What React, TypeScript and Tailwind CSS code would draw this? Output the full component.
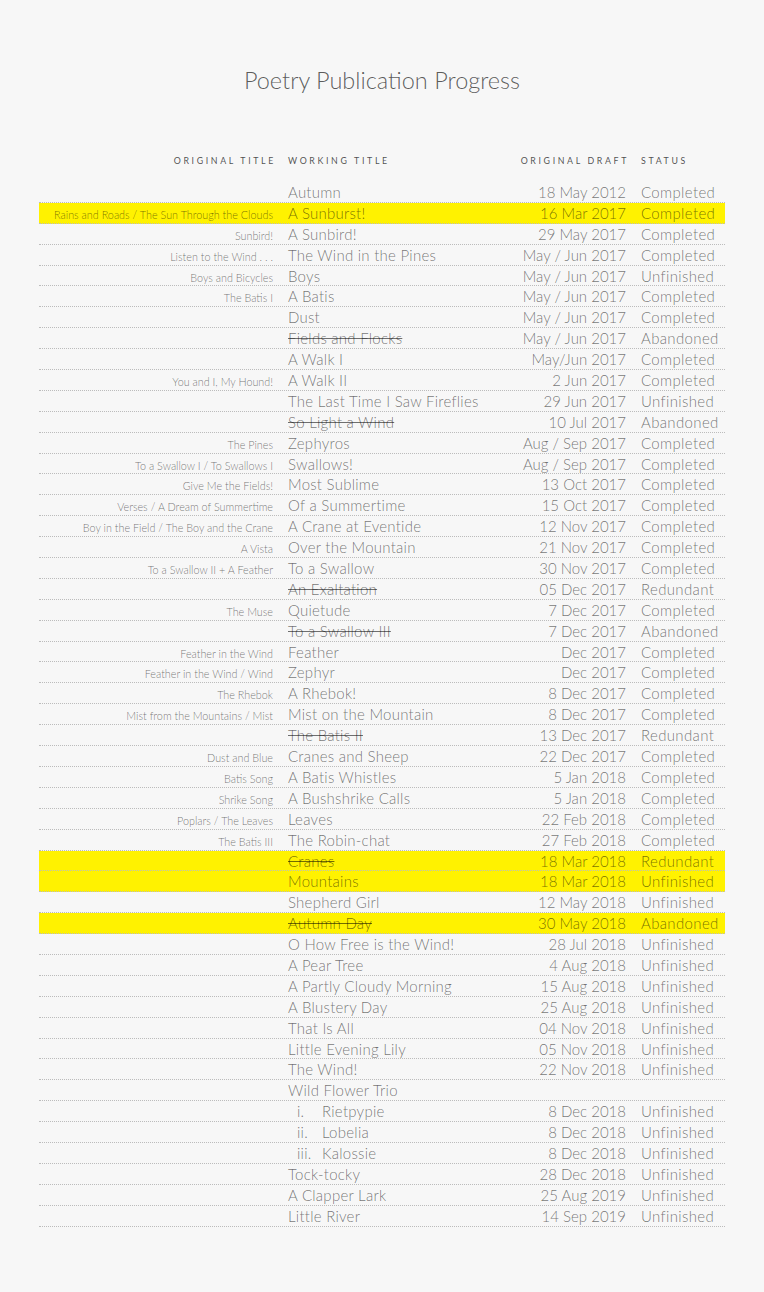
import React from "react";

type Poem = {
  original?: string;
  title: string;
  draft?: string;
  status?: string;
  struck?: boolean;
  marked?: boolean;
  sub?: string;
};

const poems: Poem[] = [
  { title: "Autumn", draft: "18 May 2012", status: "Completed" },
  { original: "Rains and Roads / The Sun Through the Clouds", title: "A Sunburst!", draft: "16 Mar 2017", status: "Completed", marked: true },
  { original: "Sunbird!", title: "A Sunbird!", draft: "29 May 2017", status: "Completed" },
  { original: "Listen to the Wind . . .", title: "The Wind in the Pines", draft: "May / Jun 2017", status: "Completed" },
  { original: "Boys and Bicycles", title: "Boys", draft: "May / Jun 2017", status: "Unfinished" },
  { original: "The Batis I", title: "A Batis", draft: "May / Jun 2017", status: "Completed" },
  { title: "Dust", draft: "May / Jun 2017", status: "Completed" },
  { title: "Fields and Flocks", draft: "May / Jun 2017", status: "Abandoned", struck: true },
  { title: "A Walk I", draft: "May/Jun 2017", status: "Completed" },
  { original: "You and I, My Hound!", title: "A Walk II", draft: "2 Jun 2017", status: "Completed" },
  { title: "The Last Time I Saw Fireflies", draft: "29 Jun 2017", status: "Unfinished" },
  { title: "So Light a Wind", draft: "10 Jul 2017", status: "Abandoned", struck: true },
  { original: "The Pines", title: "Zephyros", draft: "Aug / Sep 2017", status: "Completed" },
  { original: "To a Swallow I / To Swallows I", title: "Swallows!", draft: "Aug / Sep 2017", status: "Completed" },
  { original: "Give Me the Fields!", title: "Most Sublime", draft: "13 Oct 2017", status: "Completed" },
  { original: "Verses / A Dream of Summertime", title: "Of a Summertime", draft: "15 Oct 2017", status: "Completed" },
  { original: "Boy in the Field / The Boy and the Crane", title: "A Crane at Eventide", draft: "12 Nov 2017", status: "Completed" },
  { original: "A Vista", title: "Over the Mountain", draft: "21 Nov 2017", status: "Completed" },
  { original: "To a Swallow II + A Feather", title: "To a Swallow", draft: "30 Nov 2017", status: "Completed" },
  { title: "An Exaltation", draft: "05 Dec 2017", status: "Redundant", struck: true },
  { original: "The Muse", title: "Quietude", draft: "7 Dec 2017", status: "Completed" },
  { title: "To a Swallow III", draft: "7 Dec 2017", status: "Abandoned", struck: true },
  { original: "Feather in the Wind", title: "Feather", draft: "Dec 2017", status: "Completed" },
  { original: "Feather in the Wind / Wind", title: "Zephyr", draft: "Dec 2017", status: "Completed" },
  { original: "The Rhebok", title: "A Rhebok!", draft: "8 Dec 2017", status: "Completed" },
  { original: "Mist from the Mountains / Mist", title: "Mist on the Mountain", draft: "8 Dec 2017", status: "Completed" },
  { title: "The Batis II", draft: "13 Dec 2017", status: "Redundant", struck: true },
  { original: "Dust and Blue", title: "Cranes and Sheep", draft: "22 Dec 2017", status: "Completed" },
  { original: "Batis Song", title: "A Batis Whistles", draft: "5 Jan 2018", status: "Completed" },
  { original: "Shrike Song", title: "A Bushshrike Calls", draft: "5 Jan 2018", status: "Completed" },
  { original: "Poplars / The Leaves", title: "Leaves", draft: "22 Feb 2018", status: "Completed" },
  { original: "The Batis III", title: "The Robin-chat", draft: "27 Feb 2018", status: "Completed" },
  { title: "Cranes", draft: "18 Mar 2018", status: "Redundant", struck: true, marked: true },
  { title: "Mountains", draft: "18 Mar 2018", status: "Unfinished", marked: true },
  { title: "Shepherd Girl", draft: "12 May 2018", status: "Unfinished" },
  { title: "Autumn Day", draft: "30 May 2018", status: "Abandoned", struck: true, marked: true },
  { title: "O How Free is the Wind!", draft: "28 Jul 2018", status: "Unfinished" },
  { title: "A Pear Tree", draft: "4 Aug 2018", status: "Unfinished" },
  { title: "A Partly Cloudy Morning", draft: "15 Aug 2018", status: "Unfinished" },
  { title: "A Blustery Day", draft: "25 Aug 2018", status: "Unfinished" },
  { title: "That Is All", draft: "04 Nov 2018", status: "Unfinished" },
  { title: "Little Evening Lily", draft: "05 Nov 2018", status: "Unfinished" },
  { title: "The Wind!", draft: "22 Nov 2018", status: "Unfinished" },
  { title: "Wild Flower Trio" },
  { sub: "i.", title: "Rietpypie", draft: "8 Dec 2018", status: "Unfinished" },
  { sub: "ii.", title: "Lobelia", draft: "8 Dec 2018", status: "Unfinished" },
  { sub: "iii.", title: "Kalossie", draft: "8 Dec 2018", status: "Unfinished" },
  { title: "Tock-tocky", draft: "28 Dec 2018", status: "Unfinished" },
  { title: "A Clapper Lark", draft: "25 Aug 2019", status: "Unfinished" },
  { title: "Little River", draft: "14 Sep 2019", status: "Unfinished" },
];

const cols = "grid grid-cols-[249px_220px_133px_84px]";

function Row({ poem }: { poem: Poem }) {
  return (
    <div
      className={`${cols} h-[20.9px] items-baseline border-b border-dotted border-[#bcbcbc] ${
        poem.marked ? "bg-[#fff200]" : ""
      }`}
    >
      <div className="truncate pr-[15px] text-right text-[10.8px] leading-[20px] text-black/55">
        {poem.original}
      </div>
      <div
        className={`whitespace-nowrap text-[15px] leading-[20px] tracking-[0.25px] text-black/55 ${
          poem.struck ? "line-through" : ""
        }`}
      >
        {poem.sub ? (
          <>
            <span className="ml-[9px] inline-block w-[25px]">{poem.sub}</span>
            <span>{poem.title}</span>
          </>
        ) : (
          poem.title
        )}
      </div>
      <div className="whitespace-nowrap pr-[15px] text-right text-[15px] leading-[20px] text-black/55">
        {poem.draft}
      </div>
      <div className="whitespace-nowrap text-[15px] leading-[20px] tracking-[0.35px] text-black/55">
        {poem.status}
      </div>
    </div>
  );
}

export default function App() {
  return (
    <div className="min-h-[1292px] bg-[#f7f7f7] pt-[66px] font-['Lato','Open_Sans',sans-serif] font-light">
      <h1 className="text-center text-[23.5px] leading-[28px] text-black/65">Poetry Publication Progress</h1>

      <div className="mx-auto mt-[61px] w-[686px]">
        {/* Column headings */}
        <div
          className={`${cols} mb-[15px] h-[12px] items-center text-[8.8px] font-normal uppercase leading-[12px] tracking-[0.3em] text-black/70`}
        >
          <div className="pr-[12px] text-right">Original Title</div>
          <div>Working Title</div>
          <div className="pr-[12px] text-right">Original Draft</div>
          <div>Status</div>
        </div>

        {poems.map((p, i) => (
          <Row key={i} poem={p} />
        ))}
      </div>
    </div>
  );
}
